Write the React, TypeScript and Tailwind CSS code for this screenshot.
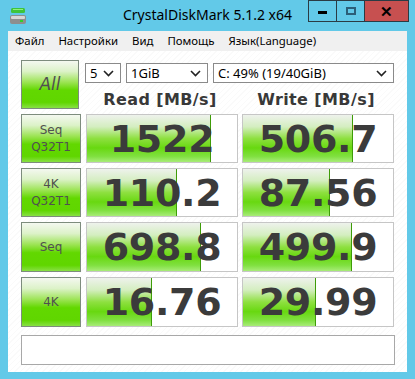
import React from "react";

const rows = [
  { label: ["Seq", "Q32T1"], read: "1522", readW: 125, write: "506.7", writeW: 111 },
  { label: ["4K", "Q32T1"], read: "110.2", readW: 91, write: "87.56", writeW: 88 },
  { label: ["Seq"], read: "698.8", readW: 115, write: "499.9", writeW: 110 },
  { label: ["4K"], read: "16.76", readW: 66, write: "29.99", writeW: 74 },
];

const btnBg =
  "bg-[linear-gradient(to_bottom,#f4f8f0_0%,#dcf2c8_22%,#9ce454_45%,#62d800_62%,#60d600_88%,#88e044_100%)]";
const barBg =
  "bg-[linear-gradient(to_bottom,#eef2ec_0%,#d4eec0_25%,#8ee040_50%,#68d810_70%,#80e040_88%,#a8ec78_100%)]";

const Chevron = () => (
  <svg width="11" height="7" viewBox="0 0 11 7" className="shrink-0">
    <path d="M1 1 L5.5 5.5 L10 1" fill="none" stroke="#222" strokeWidth="1.6" />
  </svg>
);

const Combo = ({ text, w }: { text: string; w: string }) => (
  <div
    className={`${w} flex h-[20px] items-center justify-between border border-[#8a8a8a] bg-white pl-[4px] pr-[6px] text-[13px] leading-none text-black`}
  >
    <span>{text}</span>
    <Chevron />
  </div>
);

const TestButton = ({ children, className = "" }: { children: React.ReactNode; className?: string }) => (
  <div
    className={`flex h-full w-[61px] flex-col items-center justify-center border border-[#7d8c7d] ${btnBg} text-[#505050] ${className}`}
  >
    {children}
  </div>
);

const ValueBox = ({ value, w }: { value: string; w: number }) => (
  <div className="relative h-full w-[152px] border border-[#c6c6c6] bg-white">
    <div
      className={`absolute top-0 bottom-0 left-0 border-r border-[#3e9c08] ${barBg}`}
      style={{ width: w - 1 }}
    />
    <div className="relative flex h-full items-center justify-center font-['DejaVu_Sans',sans-serif] text-[38px] font-bold leading-none tracking-[-0.3px] text-[#3b3b3b]">
      {value}
    </div>
  </div>
);

export default function App() {
  return (
    <div className="flex h-[379px] w-[415px] flex-col bg-[#62c9e8] font-['Noto_Sans',sans-serif]">
      <div className="relative flex h-[31px] shrink-0">
        <svg width="17" height="17" viewBox="0 0 17 17" className="absolute left-[10px] top-[8px]">
          <rect x="1" y="0" width="14" height="5" rx="1.5" fill="#3ec43a" />
          <rect x="3" y="1" width="10" height="1" fill="#8ef07c" />
          <rect x="0" y="7" width="16" height="9" rx="2" fill="#8e8e8e" />
          <rect x="1" y="8" width="14" height="3" rx="1" fill="#d6d6d6" />
          <rect x="10" y="12" width="3" height="2" fill="#2fd02a" />
        </svg>
        <div className="flex-1 pt-[4px] text-center text-[14px] leading-[22px] text-black">
          CrystalDiskMark 5.1.2 x64
        </div>
        <div className="absolute right-[6px] top-0 flex h-[22px]">
          <div className="flex w-[29px] items-end justify-center border border-[#2a3b44] pb-[7px]">
            <div className="h-[3px] w-[9px] bg-black" />
          </div>
          <div className="flex w-[28px] items-center justify-center border-y border-r border-[#2a3b44]">
            <div className="h-[8px] w-[10px] border-2 border-[#2b5f78]" />
          </div>
          <div className="flex w-[44px] items-center justify-center border-y border-r border-[#2a3b44] bg-[#c75050] text-[15px] font-bold leading-none text-black">
            ✕
          </div>
        </div>
      </div>
      <div className="mx-[8px] flex h-[20px] shrink-0 items-center gap-[14px] bg-[#f0f0f0] pl-[7px] text-[11.4px] text-black">
        <span>Файл</span>
        <span>Настройки</span>
        <span>Вид</span>
        <span>Помощь</span>
        <span>Язык(Language)</span>
      </div>
      <div className="mx-[8px] mb-[7px] flex-1 bg-[repeating-linear-gradient(135deg,#ffffff_0px,#ffffff_3px,#fafafa_3px,#fafafa_4px)] px-[13px] pt-[9px]">
        <div className="flex h-[49px] gap-[5px]">
          <TestButton>
            <span className="font-['DejaVu_Sans',sans-serif] text-[17px] italic">All</span>
          </TestButton>
          <div className="flex flex-col">
            <div className="mt-[3px] flex gap-[5px] pl-[1px]">
              <Combo text="5" w="w-[36px]" />
              <Combo text="1GiB" w="w-[82px]" />
              <Combo text="C: 49% (19/40GiB)" w="w-[181px]" />
            </div>
            <div className="mt-[7px] flex gap-[4px] font-['DejaVu_Sans',sans-serif] text-[16px] font-bold leading-[20px] tracking-[0.4px] text-[#383838]">
              <div className="w-[152px] text-center">Read [MB/s]</div>
              <div className="w-[152px] text-center">Write [MB/s]</div>
            </div>
          </div>
        </div>
        <div className="mt-[5px] flex flex-col gap-[5px]">
          {rows.map((r, i) => (
            <div key={i} className={`flex ${i >= 2 ? "h-[50px]" : "h-[49px]"} gap-[5px]`}>
              <TestButton className="font-['DejaVu_Sans',sans-serif] text-[12px] leading-[17px]">
                {r.label.map((l) => (
                  <span key={l}>{l}</span>
                ))}
              </TestButton>
              <div className="flex gap-[4px]">
                <ValueBox value={r.read} w={r.readW} />
                <ValueBox value={r.write} w={r.writeW} />
              </div>
            </div>
          ))}
        </div>
        <div className="mt-[8px] h-[30px] w-[374px] border border-[#a8a8a8] bg-white" />
      </div>
    </div>
  );
}
